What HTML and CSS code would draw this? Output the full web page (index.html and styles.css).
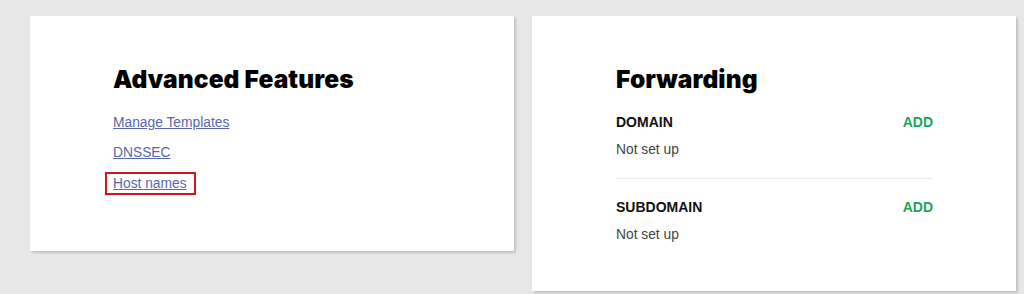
FILE: index.html
```html
<!DOCTYPE html>
<html lang="en">
<head>
<meta charset="utf-8">
<title>Domain settings</title>
<link rel="stylesheet" href="styles.css">
</head>
<body>
<main class="page">
  <section class="card card-advanced">
    <h2 class="card-title">Advanced Features</h2>
    <ul class="link-list">
      <li><a class="link" href="#">Manage Templates</a></li>
      <li><a class="link" href="#">DNSSEC</a></li>
      <li><span class="highlight"><a class="link" href="#">Host names</a></span></li>
    </ul>
  </section>
  <section class="card card-forwarding">
    <h2 class="card-title">Forwarding</h2>
    <div class="fwd-item">
      <div class="fwd-head">
        <span class="fwd-label">DOMAIN</span>
        <a class="fwd-add" href="#">ADD</a>
      </div>
      <div class="fwd-status">Not set up</div>
    </div>
    <div class="fwd-item">
      <div class="fwd-head">
        <span class="fwd-label">SUBDOMAIN</span>
        <a class="fwd-add" href="#">ADD</a>
      </div>
      <div class="fwd-status">Not set up</div>
    </div>
  </section>
</main>
</body>
</html>
```
FILE: styles.css
```css
html, body {
  margin: 0;
  padding: 0;
}
body {
  background: #e7e7e7;
  font-family: "Liberation Sans", Arial, sans-serif;
  color: #111;
  width: 1024px;
  height: 294px;
  overflow: hidden;
}
.page {
  display: flex;
  align-items: flex-start;
  gap: 18px;
  padding: 16px 0 0 30px;
}
.card {
  background: #fff;
  width: 484px;
  box-sizing: border-box;
  box-shadow: 2px 2px 2px rgba(0, 0, 0, 0.16);
}
.card-advanced {
  padding: 48px 83px 56px 83px;
}
.card-forwarding {
  padding: 48px 83px 46px 84px;
}
.card-title {
  margin: 0;
  font-family: Inter, "Noto Sans", sans-serif;
  font-weight: 900;
  font-size: 24.5px;
  line-height: 30px;
  color: #000;
  letter-spacing: 0.1px;
}
.link-list {
  list-style: none;
  margin: 18px 0 0 0;
  padding: 0;
  display: flex;
  flex-direction: column;
  gap: 9px;
}
.link-list li {
  line-height: 20px;
}
.link {
  font-size: 13.8px;
  color: #5867ad;
  text-decoration: underline;
}
.highlight {
  display: inline-block;
  margin-left: -8px;
  padding: 0 7px 1px 6px;
  border: 2px solid #d4161c;
  line-height: 17px;
}
.fwd-item {
  display: flex;
  flex-direction: column;
  gap: 8px;
  padding: 18px 0;
}
.fwd-item + .fwd-item {
  border-top: 1px solid #e8e8e8;
  padding-bottom: 0;
}
.fwd-head {
  display: flex;
  justify-content: space-between;
  align-items: baseline;
  line-height: 20px;
}
.fwd-label {
  font-weight: 700;
  font-size: 14px;
  color: #111;
}
.fwd-add {
  font-weight: 700;
  font-size: 14px;
  color: #1ba55a;
  text-decoration: none;
}
.fwd-status {
  font-size: 13.8px;
  line-height: 20px;
  color: #444;
}
```
